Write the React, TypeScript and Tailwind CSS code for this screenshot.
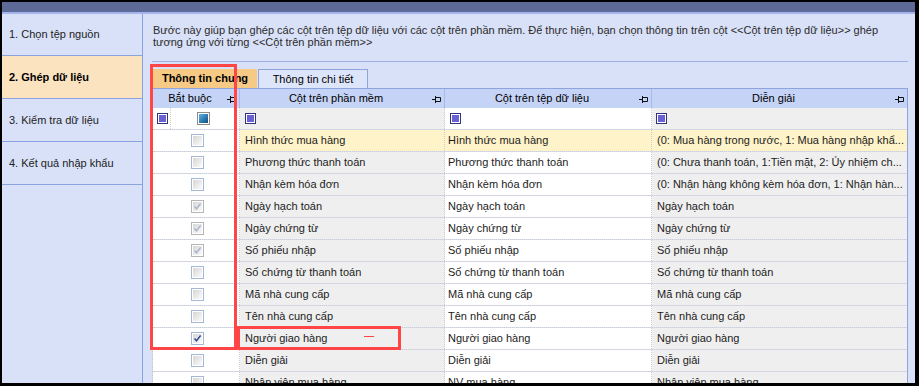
type CheckState = "off" | "dim" | "on";

const rows: { soft: string; file: string; note: string; req: CheckState }[] = [
  { soft: "Hình thức mua hàng", file: "Hình thức mua hàng", note: "(0: Mua hàng trong nước, 1: Mua hàng nhập khẩ...", req: "off" },
  { soft: "Phương thức thanh toán", file: "Phương thức thanh toán", note: "(0: Chưa thanh toán, 1:Tiền mặt, 2: Ủy nhiệm ch...", req: "off" },
  { soft: "Nhận kèm hóa đơn", file: "Nhận kèm hóa đơn", note: "(0: Nhận hàng không kèm hóa đơn, 1: Nhận hàn...", req: "off" },
  { soft: "Ngày hạch toán", file: "Ngày hạch toán", note: "Ngày hạch toán", req: "dim" },
  { soft: "Ngày chứng từ", file: "Ngày chứng từ", note: "Ngày chứng từ", req: "dim" },
  { soft: "Số phiếu nhập", file: "Số phiếu nhập", note: "Số phiếu nhập", req: "dim" },
  { soft: "Số chứng từ thanh toán", file: "Số chứng từ thanh toán", note: "Số chứng từ thanh toán", req: "off" },
  { soft: "Mã nhà cung cấp", file: "Mã nhà cung cấp", note: "Mã nhà cung cấp", req: "off" },
  { soft: "Tên nhà cung cấp", file: "Tên nhà cung cấp", note: "Tên nhà cung cấp", req: "off" },
  { soft: "Người giao hàng", file: "Người giao hàng", note: "Người giao hàng", req: "on" },
  { soft: "Diễn giải", file: "Diễn giải", note: "Diễn giải", req: "off" },
  { soft: "Nhân viên mua hàng", file: "NV mua hàng", note: "Nhân viên mua hàng", req: "off" },
];

const steps = ["1. Chọn tệp nguồn", "2. Ghép dữ liệu", "3. Kiểm tra dữ liệu", "4. Kết quả nhập khẩu"];

function Pin() {
  return (
    <svg width="10" height="8" viewBox="0 0 10 8" className="mr-[2px] shrink-0">
      <path d="M0 4.5h3.5M3.5 1v7M3.5 2.5h5v4h-5" stroke="#111" strokeWidth="1" fill="none" />
    </svg>
  );
}

function FilterIcon() {
  return (
    <span className="flex h-[11px] w-[11px] items-center justify-center border border-[#33337a] bg-white">
      <span className="h-[7px] w-[7px] bg-[#6a62d4]" />
    </span>
  );
}

function Check({ state }: { state: CheckState }) {
  const border = state === "dim" ? "border-[#b5b5b5]" : "border-[#a6b7d6]";
  return (
    <span className={`flex h-[13px] w-[13px] border ${border} bg-white p-px`}>
      <span className="flex h-full w-full items-center justify-center bg-gradient-to-br from-[#d6d6d6] to-[#fbfbfb]">
        {state !== "off" && (
          <svg width="9" height="9" viewBox="0 0 9 9">
            <path
              d="M1.5 4.5l2 2.3L7.6 1.5"
              stroke={state === "on" ? "#2c4b8c" : "#a9b5cc"}
              strokeWidth="1.4"
              fill="none"
            />
          </svg>
        )}
      </span>
    </span>
  );
}

const cols = "grid grid-cols-[87px_205px_207px_255px]";

export default function App() {
  return (
    <div className="relative h-[386px] w-[919px] overflow-hidden bg-black pb-[3px] pl-[2px] pr-[4px] pt-[2px] font-['Liberation_Sans',Arial,sans-serif] text-[11px] text-[#1c1c1c]">
      <div className="flex h-full flex-col bg-[#d9e1f8]">
        <div className="h-[10px] shrink-0 bg-[#5d6a98]" />
        <div className="h-[2px] shrink-0 bg-[#a3b5ea]" />
        <div className="flex min-h-0 flex-1">
          <aside className="w-[141px] shrink-0 border-r border-[#8aa2e2]">
            {steps.map((s, i) => (
              <div
                key={s}
                className={`flex items-center border-b border-[#8aa2e2] pl-[7px] ${i === 0 ? "h-[42px]" : "h-[43px]"} ${
                  i === 1 ? "bg-[#fbe3bf] font-bold text-black" : "text-[#222]"
                }`}
              >
                {s}
              </div>
            ))}
          </aside>

          <main className="flex min-w-0 flex-1 flex-col overflow-hidden pl-[9px] pr-[7px]">
            <p className="ml-px mt-[10px] shrink-0 whitespace-nowrap leading-[12px] text-[#2a2a2a]">
              {"Bước này giúp bạn ghép các cột trên tệp dữ liệu với các cột trên phần mềm. Để thực hiện, bạn chọn thông tin trên cột <<Cột trên tệp dữ liệu>> ghép"}
              <br />
              {"tương ứng với từng <<Cột trên phần mềm>>"}
            </p>
            <div className="mt-[13px] h-px shrink-0 bg-[#9fb1e4]" />

            <div className="ml-px mt-[7px] flex h-[19px] shrink-0">
              <div className="flex w-[104px] items-center justify-center bg-[#f6c985] font-bold text-black">Thông tin chung</div>
              <div className="ml-px flex w-[110px] items-center justify-center border border-b-0 border-[#8ea4dd] bg-[#dde5fa] text-black">
                Thông tin chi tiết
              </div>
            </div>

            <div className="shrink-0 border-r border-[#8ea4dd]">
              <div className="border-l border-dotted border-[#c4c4c4]">
                <div className={`${cols} h-[20px] border-t border-[#8ea4dd] bg-[#c5d3f6] text-black`}>
                  {["Bắt buộc", "Cột trên phần mềm", "Cột trên tệp dữ liệu", "Diễn giải"].map((h, i) => (
                    <div key={h} className={`flex items-center ${i < 3 ? "border-r border-[#a7b9ec]" : ""}`}>
                      <span className="flex-1 text-center">{h}</span>
                      <Pin />
                    </div>
                  ))}
                </div>

                <div className={`${cols} h-[22px] border-b border-dotted border-[#cccccc]`}>
                  <div className="flex border-r border-dotted border-[#cccccc] bg-white">
                    <div className="flex w-[18px] items-center justify-center border-r border-dotted border-[#cccccc] pl-px">
                      <FilterIcon />
                    </div>
                    <div className="flex flex-1 items-center justify-center pr-[4px]">
                      <span className="flex h-[13px] w-[13px] border border-[#8c8c8c] bg-white p-px">
                        <span className="h-full w-full bg-gradient-to-br from-[#5cb8e6] to-[#0c4c84]" />
                      </span>
                    </div>
                  </div>
                  <div className="flex items-center border-r border-dotted border-[#cccccc] bg-[#efefef] pl-[5px]">
                    <FilterIcon />
                  </div>
                  <div className="flex items-center border-r border-dotted border-[#cccccc] bg-white pl-[5px]">
                    <FilterIcon />
                  </div>
                  <div className="flex items-center bg-[#efefef] pl-[4px]">
                    <FilterIcon />
                  </div>
                </div>

                {rows.map((r, i) => {
                  const hl = i === 0;
                  return (
                    <div key={r.soft} className={`${cols} h-[22px] border-b border-dotted border-[#cccccc]`}>
                      <div className="flex items-center justify-center border-r border-dotted border-[#cccccc] bg-white pl-[2px]">
                        <Check state={r.req} />
                      </div>
                      <div
                        className={`flex items-center overflow-hidden whitespace-nowrap border-r border-dotted border-[#cccccc] pl-[5px] ${
                          hl ? "bg-[#fff3c9]" : "bg-[#efefef]"
                        }`}
                      >
                        {r.soft}
                      </div>
                      <div
                        className={`flex items-center overflow-hidden whitespace-nowrap border-r border-dotted border-[#cccccc] pl-[3px] ${
                          hl ? "bg-[#fff3c9]" : "bg-white"
                        }`}
                      >
                        {r.file}
                      </div>
                      <div
                        className={`flex items-center overflow-hidden whitespace-nowrap pl-[5px] ${hl ? "bg-[#fff3c9]" : "bg-[#efefef]"}`}
                      >
                        {r.note}
                      </div>
                    </div>
                  );
                })}
              </div>
            </div>
          </main>
        </div>
      </div>

      {/* red annotation marks */}
      <div className="pointer-events-none absolute left-[150px] top-[64px] h-[286px] w-[87px] border-[3px] border-[#ff4545]" />
      <div className="pointer-events-none absolute left-[237px] top-[326px] h-[24px] w-[164px] border-[3px] border-[#ff4545]" />
      <div className="pointer-events-none absolute left-[364px] top-[336px] h-px w-[10px] bg-[#ff4545]" />
    </div>
  );
}
